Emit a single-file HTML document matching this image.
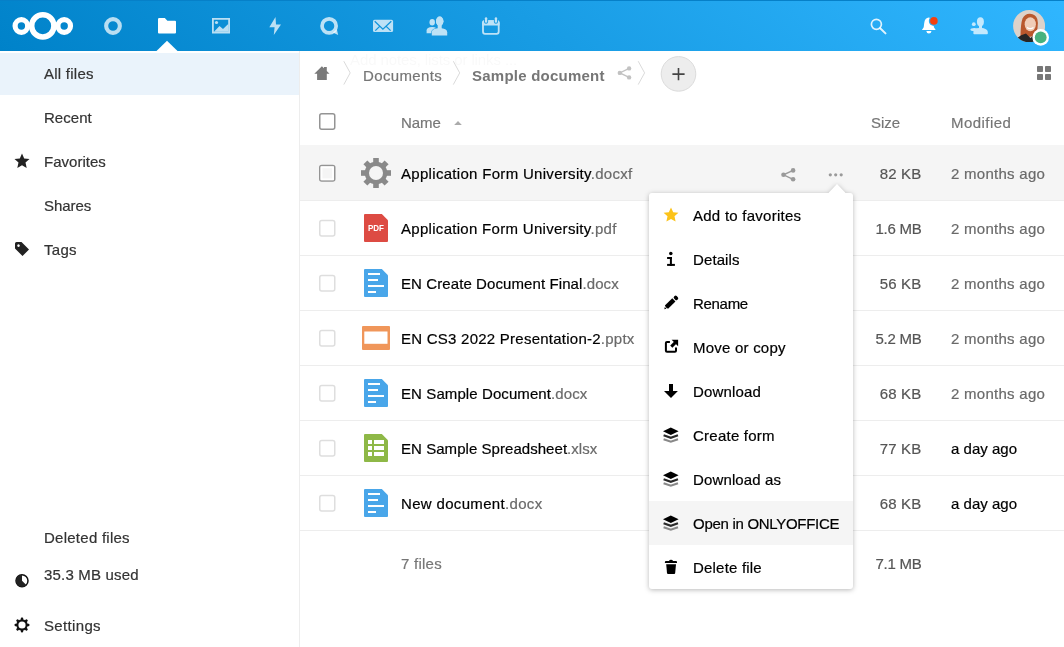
<!DOCTYPE html>
<html><head><meta charset="utf-8">
<style>
*{box-sizing:border-box;margin:0;padding:0}
html,body{width:1064px;height:647px;overflow:hidden;background:#fff;font-family:"Liberation Sans",sans-serif;color:#222;font-size:15px}
.t,.nav,.sz,.md,.l{-webkit-text-stroke:0.2px currentColor}
.abs{position:absolute}
#hdr{position:absolute;left:0;top:0;width:1064px;height:51px;background:linear-gradient(40deg,#0082c9 0%,#30b6ff 100%)}
#hdr .topline{position:absolute;left:0;top:0;width:1064px;height:1px;background:#0680c8}
#side,#main{filter:drop-shadow(0 0 0 rgba(0,0,0,0))}
#side{position:absolute;left:0;top:51px;width:300px;height:596px;background:#fff;border-right:1px solid #ededed}
.nav{position:absolute;margin-top:1px;left:44px;font-size:15px;color:#333;letter-spacing:0.2px;white-space:nowrap}
.row{position:absolute;left:300px;width:764px;height:55px;border-bottom:1px solid #ededed}
.t{position:absolute;white-space:nowrap;letter-spacing:0.25px;color:#000}
.ext{color:#6a6a6a}
.cb{position:absolute;left:319px;width:16px;height:16px;border:2px solid #dcdcdc;border-radius:3px;background:#fff}
.sz{position:absolute;right:142.5px;color:#555;white-space:nowrap;text-align:right;letter-spacing:0.2px}
.md{position:absolute;left:951px;color:#6a6a6a;white-space:nowrap;letter-spacing:0.2px}
#menu{position:absolute;left:649px;top:193px;width:204px;height:396px;background:#fff;border-radius:3px;filter:drop-shadow(0 1px 2.5px rgba(0,0,0,0.28))}
.mi{position:absolute;left:0;width:204px;height:44px}
.mi .l{position:absolute;left:44px;top:14px;white-space:nowrap;color:#000;letter-spacing:0.2px}
.mi svg{position:absolute;left:14px;top:14px}
</style></head><body>
<div id="hdr"><div class="topline"></div>
<svg class="abs" style="left:0;top:0" width="1064" height="51" viewBox="0 0 1064 51">
 <g fill="none" stroke="#fff">
  <circle cx="21.4" cy="26" r="6.3" stroke-width="5.2"/>
  <circle cx="42.8" cy="25.9" r="11.1" stroke-width="5.5"/>
  <circle cx="64.2" cy="26" r="6.3" stroke-width="5.2"/>
  <circle cx="113" cy="26" r="6.85" stroke-width="4.1" stroke-opacity="0.72"/>
 </g>
 <path d="M158 19.2 Q158 18 159.2 18 L164.8 18 L167.4 20.8 L175 20.8 Q176 20.8 176 21.8 L176 32.6 Q176 33.6 175 33.6 L159 33.6 Q158 33.6 158 32.6 Z" fill="#fff"/>
 <path d="M156.5 51 L167 40.8 L177.5 51 Z" fill="#fff"/>
 <g fill="#fff" fill-opacity="0.72">
  <path d="M212 18 H230 V33.5 H212 Z M213.8 19.8 V31.7 H228.2 V19.8 Z" fill-rule="evenodd"/>
  <circle cx="216.5" cy="22.5" r="1.6"/>
  <path d="M214 31.7 L219.5 26 L223 29 L228.2 24 L228.2 31.7 Z"/>
  <path d="M275.5 17 L269.3 27.2 L274.6 27.2 L273.8 35 L281 24.6 L276 24.6 Z"/>
  <circle cx="329.1" cy="25.9" r="7.05" fill="none" stroke="#fff" stroke-opacity="0.72" stroke-width="3.7"/><path d="M332.8 32.4 L338.2 35 L336.8 29.2 Z"/>
  <rect x="373" y="19.8" width="20.1" height="12.3" rx="1.6" mask="url(#mailm)"/>
  </g><g opacity="0.72"><g fill="#fff"><ellipse cx="432.2" cy="22.3" rx="2.7" ry="3.2"/><path d="M426.6 33.3 V30.6 Q426.6 27.4 432.2 27.1 Q437.5 27.4 437.5 30.6 V33.3 Z"/></g>
  <g fill="#fff" stroke="#1b96de" stroke-width="1.1" paint-order="stroke"><ellipse cx="439.7" cy="21.3" rx="3.7" ry="4.7"/><path d="M431.8 35.5 V32.3 Q431.8 28.4 439.7 28 Q447.2 28.4 447.2 32.3 V35.5 Z"/></g><g fill="#fff"><ellipse cx="439.7" cy="21.3" rx="3.7" ry="4.7"/><rect x="437.7" y="24" width="4" height="5"/></g></g><g fill="#fff" fill-opacity="0.72">
 </g>
 <g opacity="0.72"><g mask="url(#calm)"><rect x="483" y="21.1" width="15.7" height="12.7" rx="2" fill="none" stroke="#fff" stroke-width="1.8"/><path d="M482.1 22.4 Q482.1 20.2 484.3 20.2 H497.4 Q499.6 20.2 499.6 22.4 V25.4 H482.1 Z" fill="#fff"/></g>
  <rect x="484.9" y="17.2" width="2.3" height="5.6" rx="1.15" fill="#fff"/><rect x="494.8" y="17.2" width="2.3" height="5.6" rx="1.15" fill="#fff"/></g>
 <g fill="none" stroke="#fff" stroke-opacity="0.85">
  <circle cx="876.4" cy="24.3" r="5.0" stroke-width="1.7"/>
  <path d="M880.2 28.2 L885.5 33.4" stroke-width="2" stroke-linecap="round"/>
 </g>
 <path d="M928.8 17.6 C926.2 17.8 924.6 19.8 924.2 23.2 L923.7 27.2 L921.9 29.9 L935.7 29.9 L933.9 27.2 L933.4 23.2 C933 19.8 931.4 17.6 928.8 17.6 Z M926.3 31 H931.5 Q931.1 33.6 928.9 33.6 Q926.7 33.6 926.3 31 Z" fill="#fff"/>
 <circle cx="933.9" cy="20.9" r="5.1" fill="#2eaef5"/>
 <circle cx="933.9" cy="20.9" r="3.8" fill="#f5400f"/>
 <g fill="#fff" opacity="0.72">
  <circle cx="973.8" cy="24.2" r="1.9"/><ellipse cx="974.3" cy="29.6" rx="3.9" ry="1.6"/><ellipse cx="980.4" cy="21.8" rx="3.5" ry="4.5"/><rect x="979" y="25" width="3" height="3.5"/><path d="M973.4 33.4 V32 Q973.4 28.5 980.5 27.8 Q987.8 28.5 987.8 32 V33.4 Q987.8 34.2 987 34.2 H974.2 Q973.4 34.2 973.4 33.4 Z"/>
 </g>
 <defs><mask id="calm"><rect x="470" y="10" width="40" height="30" fill="#fff"/><rect x="484" y="16.2" width="4.1" height="7.6" rx="2" fill="#000"/><rect x="493.9" y="16.2" width="4.1" height="7.6" rx="2" fill="#000"/></mask><mask id="mailm"><rect x="360" y="10" width="40" height="30" fill="#fff"/><path d="M374.7 21.2 L382.9 29.2 L391.3 21.2 M375.3 30.6 L379.4 26.6 M390.6 30.6 L386.5 26.6" fill="none" stroke="#000" stroke-width="1.3"/></mask><clipPath id="av"><circle cx="1029.1" cy="26.1" r="16"/></clipPath>
 <radialGradient id="face" cx="0.5" cy="0.4" r="0.5"><stop offset="0" stop-color="#f3c9b0"/><stop offset="1" stop-color="#e0a58a"/></radialGradient></defs>
 <g clip-path="url(#av)">
  <rect x="1013" y="10" width="32" height="32" fill="#ddd2ca"/>
  <path d="M1020.5 38 Q1020.5 24 1022.5 18.5 Q1025 13.6 1030 13.8 Q1035.5 14 1037.3 19 Q1038.5 23 1037.5 28.5 L1035.5 36 Z" fill="#b9582d"/>
  <ellipse cx="1030.3" cy="24.3" rx="5.6" ry="7" fill="#f0cdb8"/>
  <path d="M1027 27.5 Q1030.3 29.8 1033.5 27.5" fill="none" stroke="#fff" stroke-width="1.2"/>
  <path d="M1014 44 L1016.5 38.5 Q1021 34.5 1026 33.5 L1030.5 38 L1034.5 34.5 Q1037 35.5 1038 38 L1040 44 Z" fill="#262626"/>
 </g>
 <circle cx="1040.7" cy="37.4" r="8.3" fill="#fff"/>
 <circle cx="1040.7" cy="37.4" r="5.9" fill="#47b27f"/>
</svg>
</div>
<div id="side">
  <div class="abs" style="left:0;top:2px;width:299px;height:42px;background:#eaf3fb"></div>
  <div class="nav" style="top:13px;letter-spacing:0.248px">All files</div>
  <div class="nav" style="top:57px;letter-spacing:0.034px">Recent</div>
  <div class="nav" style="top:101px;letter-spacing:0.014px">Favorites</div>
  <div class="nav" style="top:145px;letter-spacing:-0.046px">Shares</div>
  <div class="nav" style="top:189px;letter-spacing:0.271px">Tags</div>
  <div class="nav" style="top:477px;letter-spacing:0.254px">Deleted files</div>
  <div class="nav" style="top:514px;letter-spacing:0.185px">35.3 MB used</div>
  <div class="nav" style="top:565px;letter-spacing:0.342px">Settings</div>
  <svg class="abs" style="left:14px;top:102px" width="16" height="16" viewBox="0 0 16 16"><path d="M8 0.5 L10.2 5.5 L15.5 6 L11.5 9.6 L12.7 15 L8 12.2 L3.3 15 L4.5 9.6 L0.5 6 L5.8 5.5 Z" fill="#222"/></svg>
  <svg class="abs" style="left:14px;top:190px" width="16" height="16" viewBox="0 0 16 16"><path d="M1 2.5 Q1 1 2.5 1 H7.5 L15 8.5 L8.5 15 L1 7.5 Z M4.5 3.3 A1.3 1.3 0 1 0 4.51 3.3 Z" fill="#222" fill-rule="evenodd"/></svg>
  <svg class="abs" style="left:14px;top:522px" width="16" height="16" viewBox="0 0 16 16"><circle cx="8" cy="7.7" r="6" fill="none" stroke="#111" stroke-width="1.5"/><path d="M8 1.7 A6 6 0 1 0 12.3 11.9 L8 7.7 Z" fill="#222"/></svg>
  <svg class="abs" style="left:14px;top:566px" width="16" height="16" viewBox="0 0 16 16"><defs><mask id="sg"><rect width="16" height="16" fill="#fff"/><circle cx="8" cy="8" r="3.6" fill="#000"/></mask></defs><g fill="#111" mask="url(#sg)"><rect x="6.8" y="0.6" width="2.4" height="4" rx="0.8" transform="rotate(0 8 8)"/><rect x="6.8" y="0.6" width="2.4" height="4" rx="0.8" transform="rotate(45 8 8)"/><rect x="6.8" y="0.6" width="2.4" height="4" rx="0.8" transform="rotate(90 8 8)"/><rect x="6.8" y="0.6" width="2.4" height="4" rx="0.8" transform="rotate(135 8 8)"/><rect x="6.8" y="0.6" width="2.4" height="4" rx="0.8" transform="rotate(180 8 8)"/><rect x="6.8" y="0.6" width="2.4" height="4" rx="0.8" transform="rotate(225 8 8)"/><rect x="6.8" y="0.6" width="2.4" height="4" rx="0.8" transform="rotate(270 8 8)"/><rect x="6.8" y="0.6" width="2.4" height="4" rx="0.8" transform="rotate(315 8 8)"/><circle cx="8" cy="8" r="5.7"/></g></svg>

</div>

<div id="main">
 <!-- breadcrumb -->
 <svg class="abs" style="left:300px;top:51px" width="420" height="48" viewBox="300 51 420 48">
  <path d="M321.9 66.2 L314.3 73.8 L317.1 73.8 L317.1 79.9 L326.8 79.9 L326.8 73.8 L329.5 73.8 L326.8 71.1 L326.8 67.1 L324 67.1 L324 68.3 Z" fill="#7a7a7a"/>
  <path d="M343.8 61.2 L350.2 72.9 L343.8 84.6" fill="none" stroke="#dadada" stroke-width="1"/>
  <path d="M453.3 61.2 L459.7 72.9 L453.3 84.6" fill="none" stroke="#dadada" stroke-width="1"/>
  <path d="M638.2 61.2 L644.6 72.9 L638.2 84.6" fill="none" stroke="#dadada" stroke-width="1"/>
  <g fill="#c2c2c2"><circle cx="629.1" cy="68.4" r="2.2"/><circle cx="629.1" cy="77.4" r="2.2"/><circle cx="619.8" cy="72.9" r="2.2"/></g>
  <path d="M629.1 68.4 L619.8 72.9 L629.1 77.4" fill="none" stroke="#c2c2c2" stroke-width="1.3"/>
  <circle cx="678.5" cy="73.9" r="17.3" fill="#ededed" stroke="#dbdbdb" stroke-width="1"/>
  <path d="M678.5 68 V80.2 M672.4 74.1 H684.6" stroke="#444" stroke-width="1.6"/>
 </svg>
 <div class="t" style="left:350px;top:51px;font-size:15px;color:#222;opacity:0.025;letter-spacing:-0.1px;-webkit-text-stroke:0">Add notes, lists or links ...</div>
 <div class="t" style="left:363px;top:67px;color:#767676;letter-spacing:0.366px">Documents</div>
 <div class="t" style="left:472px;top:67px;color:#767676;font-weight:bold;-webkit-text-stroke:0;letter-spacing:0.235px">Sample document</div>
 <svg class="abs" style="left:1037px;top:66px" width="15" height="15" viewBox="0 0 15 15"><g fill="#777"><rect x="0" y="0" width="6" height="6" rx="0.8"/><rect x="8" y="0" width="6" height="6" rx="0.8"/><rect x="0" y="8" width="6" height="6" rx="0.8"/><rect x="8" y="8" width="6" height="6" rx="0.8"/></g></svg>

 <!-- table header -->
 
 <div class="t" style="left:401px;top:114px;color:#767676;letter-spacing:-0.039px">Name</div>
 <svg class="abs" style="left:453px;top:120px" width="10" height="6"><path d="M1.2 5 L5 1 L8.8 5 Z" fill="#ababab"/></svg>
 <div class="t" style="left:871px;top:114px;color:#767676;letter-spacing:0.004px">Size</div>
 <div class="t" style="left:951px;top:114px;color:#767676;letter-spacing:0.457px">Modified</div>

 <!-- rows -->
 <div class="row" style="top:145px;height:56px;background:#f5f5f5"></div>
 <div class="row" style="top:201px"></div>
 <div class="row" style="top:256px"></div>
 <div class="row" style="top:311px"></div>
 <div class="row" style="top:366px"></div>
 <div class="row" style="top:421px"></div>
 <div class="row" style="top:476px"></div>
 <svg class="abs" style="left:0;top:0" width="1064" height="647" viewBox="0 0 1064 647"><rect x="319.75" y="113.75" width="15" height="15.5" rx="2" fill="#fff" stroke="#949494" stroke-width="1.5"/><rect x="319.75" y="165.5" width="15" height="15.5" rx="2" fill="#f5f5f5" stroke="#949494" stroke-width="1.5"/><rect x="321.5" y="167.3" width="11.5" height="12" fill="none" stroke="#fff" stroke-width="1.8"/><rect x="319.75" y="220.5" width="15" height="15.5" rx="2" fill="#fff" stroke="#dedede" stroke-width="1.5"/><rect x="319.75" y="275.5" width="15" height="15.5" rx="2" fill="#fff" stroke="#dedede" stroke-width="1.5"/><rect x="319.75" y="330.5" width="15" height="15.5" rx="2" fill="#fff" stroke="#dedede" stroke-width="1.5"/><rect x="319.75" y="385.5" width="15" height="15.5" rx="2" fill="#fff" stroke="#dedede" stroke-width="1.5"/><rect x="319.75" y="440.5" width="15" height="15.5" rx="2" fill="#fff" stroke="#dedede" stroke-width="1.5"/><rect x="319.75" y="495.5" width="15" height="15.5" rx="2" fill="#fff" stroke="#dedede" stroke-width="1.5"/></svg>

 <svg class="abs" style="left:355px;top:150px" width="45" height="370" viewBox="355 150 45 370">
  <!-- gear -->
  <g fill="#898989">
   <g mask="url(#gh)"><rect x="373.2" y="158" width="5.6" height="6" transform="rotate(0 376 173)"/><rect x="373.2" y="158" width="5.6" height="6" transform="rotate(45 376 173)"/><rect x="373.2" y="158" width="5.6" height="6" transform="rotate(90 376 173)"/><rect x="373.2" y="158" width="5.6" height="6" transform="rotate(135 376 173)"/><rect x="373.2" y="158" width="5.6" height="6" transform="rotate(180 376 173)"/><rect x="373.2" y="158" width="5.6" height="6" transform="rotate(225 376 173)"/><rect x="373.2" y="158" width="5.6" height="6" transform="rotate(270 376 173)"/><rect x="373.2" y="158" width="5.6" height="6" transform="rotate(315 376 173)"/><circle cx="376" cy="173" r="11.3"/></g><defs><mask id="gh"><rect x="355" y="150" width="45" height="45" fill="#fff"/><circle cx="376" cy="173" r="7" fill="#000"/></mask></defs>
  </g>
  <!-- pdf -->
  <path d="M365 214 H381.8 L388 220.2 V241 Q388 242 387 242 H365 Q364 242 364 241 V215 Q364 214 365 214 Z" fill="#dd4b43"/>
  <text x="376" y="231.3" font-family="Liberation Sans" font-weight="bold" font-size="8.2" fill="#fff" text-anchor="middle" textLength="16" lengthAdjust="spacingAndGlyphs">PDF</text>
  <!-- docx -->
  <g id="doc"><path d="M365 269 H381.8 L388 275.2 V296 Q388 297 387 297 H365 Q364 297 364 296 V270 Q364 269 365 269 Z" fill="#49a6e9"/><g fill="#fff"><rect x="368" y="273" width="12" height="2"/><rect x="368" y="279" width="10" height="2"/><rect x="368" y="285" width="16" height="2"/><rect x="368" y="291" width="8" height="2"/></g></g>
  <!-- pptx -->
  <rect x="362" y="326" width="28" height="24" rx="1" fill="#f0965a"/>
  <rect x="364.3" y="331.5" width="23.2" height="12.3" fill="#fff"/>
  <use href="#doc" y="110"/>
  <!-- xlsx -->
  <path d="M365 434 H381.8 L388 440.2 V461 Q388 462 387 462 H365 Q364 462 364 461 V435 Q364 434 365 434 Z" fill="#8eb847"/><g fill="#fff"><rect x="368" y="440" width="4" height="4"/><rect x="374" y="440" width="10" height="4"/><rect x="368" y="446" width="4" height="4"/><rect x="374" y="446" width="10" height="4"/><rect x="368" y="452" width="4" height="4"/><rect x="374" y="452" width="10" height="4"/></g>
  <use href="#doc" y="220"/>
 </svg>

 <div class="t" style="left:401px;top:165px;letter-spacing:0.307px">Application Form University<span class="ext">.docxf</span></div>
 <div class="t" style="left:401px;top:220px;letter-spacing:0.297px">Application Form University<span class="ext">.pdf</span></div>
 <div class="t" style="left:401px;top:275px;letter-spacing:0.093px">EN Create Document Final<span class="ext">.docx</span></div>
 <div class="t" style="left:401px;top:330px;letter-spacing:0.244px">EN CS3 2022 Presentation-2<span class="ext">.pptx</span></div>
 <div class="t" style="left:401px;top:385px;letter-spacing:0.092px">EN Sample Document<span class="ext">.docx</span></div>
 <div class="t" style="left:401px;top:440px;letter-spacing:0.048px">EN Sample Spreadsheet<span class="ext">.xlsx</span></div>
 <div class="t" style="left:401px;top:495px;letter-spacing:0.330px">New document<span class="ext">.docx</span></div>
 <div class="t" style="left:401px;top:555px;color:#767676;letter-spacing:0.252px">7 files</div>

 <svg class="abs" style="left:775px;top:160px" width="75" height="28" viewBox="775 160 75 28">
  <g fill="#9a9a9a"><circle cx="793.1" cy="170.4" r="2.3"/><circle cx="793.1" cy="179.3" r="2.3"/><circle cx="783.5" cy="174.8" r="2.3"/></g>
  <path d="M793.1 170.4 L783.5 174.8 L793.1 179.3" fill="none" stroke="#9a9a9a" stroke-width="1.4"/>
  <g fill="#9a9a9a"><circle cx="830.3" cy="174.8" r="1.6"/><circle cx="835.7" cy="174.8" r="1.6"/><circle cx="841.2" cy="174.8" r="1.6"/></g>
 </svg>

 <div class="sz" style="top:165px">82 KB</div>
 <div class="sz" style="top:220px;letter-spacing:-0.25px">1.6 MB</div>
 <div class="sz" style="top:275px">56 KB</div>
 <div class="sz" style="top:330px;letter-spacing:-0.25px">5.2 MB</div>
 <div class="sz" style="top:385px">68 KB</div>
 <div class="sz" style="top:440px">77 KB</div>
 <div class="sz" style="top:495px">68 KB</div>
 <div class="sz" style="top:555px;letter-spacing:-0.25px">7.1 MB</div>
 <div class="md" style="top:165px;letter-spacing:0.272px">2 months ago</div>
 <div class="md" style="top:220px;letter-spacing:0.272px">2 months ago</div>
 <div class="md" style="top:275px;letter-spacing:0.272px">2 months ago</div>
 <div class="md" style="top:330px;letter-spacing:0.272px">2 months ago</div>
 <div class="md" style="top:385px;letter-spacing:0.272px">2 months ago</div>
 <div class="md" style="top:440px;color:#000;letter-spacing:0.014px">a day ago</div>
 <div class="md" style="top:495px;color:#000;letter-spacing:0.014px">a day ago</div>
</div>

<div id="menu">
 <svg class="abs" style="left:176px;top:-10px" width="24" height="11"><path d="M2.5 11 L12 1 L21.5 11 Z" fill="#fff"/></svg>
 <div class="mi" style="top:0"><svg width="16" height="16" viewBox="0 0 16 16"><path d="M8 0.6 L10.2 5.3 L15.4 5.8 L11.5 9.3 L12.6 14.6 L8 11.9 L3.4 14.6 L4.5 9.3 L0.6 5.8 L5.8 5.3 Z" fill="#fcc31a"/></svg><div class="l" style="letter-spacing:0.258px">Add to favorites</div></div>
 <div class="mi" style="top:44px"><svg width="16" height="16" viewBox="0 0 16 16"><g fill="#000"><circle cx="7.8" cy="2.6" r="1.75"/><rect x="4.1" y="6" width="4.8" height="2"/><rect x="6.9" y="6" width="2" height="8.9"/><rect x="4.1" y="12.9" width="7.8" height="2"/></g></svg><div class="l" style="letter-spacing:0.107px">Details</div></div>
 <div class="mi" style="top:88px"><svg width="16" height="16" viewBox="0 0 16 16"><g transform="translate(1.3 14.2) rotate(-44)"><path d="M0 0 L1.9 -1.2 L1.9 1.2 Z" fill="#000"/><path d="M3 -2.3 L13.3 -2.3 L13.3 2.3 L3 2.3 L2.4 0 Z" fill="#000"/><rect x="14.4" y="-2.3" width="3.6" height="4.6" rx="1.5" fill="#000"/></g></svg><div class="l" style="letter-spacing:-0.301px">Rename</div></div>
 <div class="mi" style="top:132px"><svg width="16" height="16" viewBox="0 0 16 16"><path d="M6.9 2.9 H4 Q2.9 2.9 2.9 4 V11.8 Q2.9 12.8 4 12.8 H11.9 Q13 12.8 13 11.8 V8.6" fill="none" stroke="#000" stroke-width="2"/><path d="M8.6 0.8 H15.1 V7.3 Z" fill="#000"/><path d="M12.3 3.6 L8.3 7.6" stroke="#000" stroke-width="3"/></svg><div class="l" style="letter-spacing:0.223px">Move or copy</div></div>
 <div class="mi" style="top:176px"><svg width="16" height="16" viewBox="0 0 16 16"><path d="M6 1 H10 V8 H14.9 L8 15 L1 8 H6 Z" fill="#000"/></svg><div class="l" style="letter-spacing:0.154px">Download</div></div>
 <div class="mi" style="top:220px"><svg width="16" height="16" viewBox="0 0 16 16"><path d="M0 4.3 L7.8 0.4 L15.6 4.3 L7.8 8.1 Z" fill="#000"/><path d="M0.6 8.3 L7.8 10.9 L15 8.3" fill="none" stroke="#2a2a2a" stroke-width="2.2"/><path d="M0.6 12.2 L7.8 14.7 L15 12.2" fill="none" stroke="#888" stroke-width="2.2"/></svg><div class="l" style="letter-spacing:0.240px">Create form</div></div>
 <div class="mi" style="top:264px"><svg width="16" height="16" viewBox="0 0 16 16"><path d="M0 4.3 L7.8 0.4 L15.6 4.3 L7.8 8.1 Z" fill="#000"/><path d="M0.6 8.3 L7.8 10.9 L15 8.3" fill="none" stroke="#2a2a2a" stroke-width="2.2"/><path d="M0.6 12.2 L7.8 14.7 L15 12.2" fill="none" stroke="#888" stroke-width="2.2"/></svg><div class="l" style="letter-spacing:0.138px">Download as</div></div>
 <div class="mi" style="top:308px;background:#f5f5f5"><svg width="16" height="16" viewBox="0 0 16 16"><path d="M0 4.3 L7.8 0.4 L15.6 4.3 L7.8 8.1 Z" fill="#000"/><path d="M0.6 8.3 L7.8 10.9 L15 8.3" fill="none" stroke="#2a2a2a" stroke-width="2.2"/><path d="M0.6 12.2 L7.8 14.7 L15 12.2" fill="none" stroke="#888" stroke-width="2.2"/></svg><div class="l" style="letter-spacing:-0.290px">Open in ONLYOFFICE</div></div>
 <div class="mi" style="top:352px"><svg width="16" height="16" viewBox="0 0 16 16"><path d="M1.9 2.9 Q1.9 1.9 3 1.9 H6 Q6.3 0.8 8 0.8 Q9.7 0.8 10 1.9 H13 Q14 1.9 14 2.9 V3.9 H1.9 Z" fill="#000"/><path d="M3.2 5.2 H13 L12.2 14 Q12.1 14.9 11.2 14.9 H5 Q4.1 14.9 4 14 Z" fill="#000"/></svg><div class="l" style="letter-spacing:0.200px">Delete file</div></div>
</div>
</div>
</body></html>
